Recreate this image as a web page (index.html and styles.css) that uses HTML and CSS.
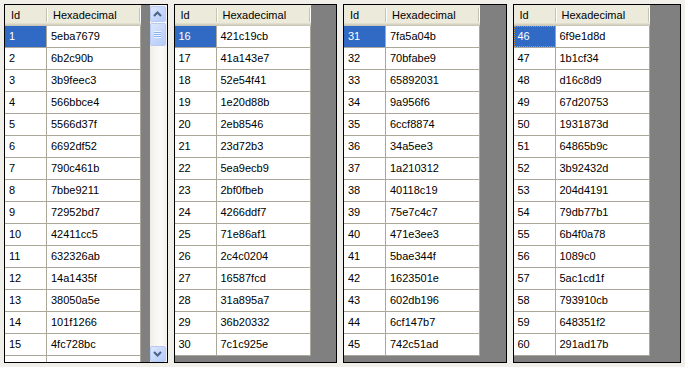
FILE: index.html
```html
<!DOCTYPE html>
<html>
<head>
<meta charset="utf-8">
<link rel="stylesheet" href="styles.css">
</head>
<body>
<div class="wrap">
  <div class="grid p1">
    <div class="tbl">
      <div class="hdr"><div class="hc id">Id</div><div class="hc hex">Hexadecimal</div></div>
      <div class="row"><div class="c id sel">1</div><div class="c hex">5eba7679</div></div>
      <div class="row"><div class="c id">2</div><div class="c hex">6b2c90b</div></div>
      <div class="row"><div class="c id">3</div><div class="c hex">3b9feec3</div></div>
      <div class="row"><div class="c id">4</div><div class="c hex">566bbce4</div></div>
      <div class="row"><div class="c id">5</div><div class="c hex">5566d37f</div></div>
      <div class="row"><div class="c id">6</div><div class="c hex">6692df52</div></div>
      <div class="row"><div class="c id">7</div><div class="c hex">790c461b</div></div>
      <div class="row"><div class="c id">8</div><div class="c hex">7bbe9211</div></div>
      <div class="row"><div class="c id">9</div><div class="c hex">72952bd7</div></div>
      <div class="row"><div class="c id">10</div><div class="c hex">42411cc5</div></div>
      <div class="row"><div class="c id">11</div><div class="c hex">632326ab</div></div>
      <div class="row"><div class="c id">12</div><div class="c hex">14a1435f</div></div>
      <div class="row"><div class="c id">13</div><div class="c hex">38050a5e</div></div>
      <div class="row"><div class="c id">14</div><div class="c hex">101f1266</div></div>
      <div class="row"><div class="c id">15</div><div class="c hex">4fc728bc</div></div>
      <div class="row"><div class="c id"></div><div class="c hex"></div></div>
    </div>
    <div class="sb">
      <div class="sbtn"><div class="sbi"><svg width="9" height="6" viewBox="0 0 9 6"><polyline points="1,5 4.5,1.5 8,5" fill="none" stroke="#4d6185" stroke-width="2"/></svg></div></div>
      <div class="thumb"><div class="sbi"><div class="grip"></div></div></div>
      <div class="track"></div>
      <div class="sbtn"><div class="sbi"><svg width="9" height="6" viewBox="0 0 9 6"><polyline points="1,1 4.5,4.5 8,1" fill="none" stroke="#4d6185" stroke-width="2"/></svg></div></div>
    </div>
  </div>

  <div class="grid">
    <div class="tbl">
      <div class="hdr"><div class="hc id">Id</div><div class="hc hex">Hexadecimal</div></div>
      <div class="row"><div class="c id sel">16</div><div class="c hex">421c19cb</div></div>
      <div class="row"><div class="c id">17</div><div class="c hex">41a143e7</div></div>
      <div class="row"><div class="c id">18</div><div class="c hex">52e54f41</div></div>
      <div class="row"><div class="c id">19</div><div class="c hex">1e20d88b</div></div>
      <div class="row"><div class="c id">20</div><div class="c hex">2eb8546</div></div>
      <div class="row"><div class="c id">21</div><div class="c hex">23d72b3</div></div>
      <div class="row"><div class="c id">22</div><div class="c hex">5ea9ecb9</div></div>
      <div class="row"><div class="c id">23</div><div class="c hex">2bf0fbeb</div></div>
      <div class="row"><div class="c id">24</div><div class="c hex">4266ddf7</div></div>
      <div class="row"><div class="c id">25</div><div class="c hex">71e86af1</div></div>
      <div class="row"><div class="c id">26</div><div class="c hex">2c4c0204</div></div>
      <div class="row"><div class="c id">27</div><div class="c hex">16587fcd</div></div>
      <div class="row"><div class="c id">28</div><div class="c hex">31a895a7</div></div>
      <div class="row"><div class="c id">29</div><div class="c hex">36b20332</div></div>
      <div class="row"><div class="c id">30</div><div class="c hex">7c1c925e</div></div>
    </div>
  </div>

  <div class="grid">
    <div class="tbl">
      <div class="hdr"><div class="hc id">Id</div><div class="hc hex">Hexadecimal</div></div>
      <div class="row"><div class="c id sel">31</div><div class="c hex">7fa5a04b</div></div>
      <div class="row"><div class="c id">32</div><div class="c hex">70bfabe9</div></div>
      <div class="row"><div class="c id">33</div><div class="c hex">65892031</div></div>
      <div class="row"><div class="c id">34</div><div class="c hex">9a956f6</div></div>
      <div class="row"><div class="c id">35</div><div class="c hex">6ccf8874</div></div>
      <div class="row"><div class="c id">36</div><div class="c hex">34a5ee3</div></div>
      <div class="row"><div class="c id">37</div><div class="c hex">1a210312</div></div>
      <div class="row"><div class="c id">38</div><div class="c hex">40118c19</div></div>
      <div class="row"><div class="c id">39</div><div class="c hex">75e7c4c7</div></div>
      <div class="row"><div class="c id">40</div><div class="c hex">471e3ee3</div></div>
      <div class="row"><div class="c id">41</div><div class="c hex">5bae344f</div></div>
      <div class="row"><div class="c id">42</div><div class="c hex">1623501e</div></div>
      <div class="row"><div class="c id">43</div><div class="c hex">602db196</div></div>
      <div class="row"><div class="c id">44</div><div class="c hex">6cf147b7</div></div>
      <div class="row"><div class="c id">45</div><div class="c hex">742c51ad</div></div>
    </div>
  </div>

  <div class="grid p4">
    <div class="tbl">
      <div class="hdr"><div class="hc id">Id</div><div class="hc hex">Hexadecimal</div></div>
      <div class="row"><div class="c id sel focus">46</div><div class="c hex">6f9e1d8d</div></div>
      <div class="row"><div class="c id">47</div><div class="c hex">1b1cf34</div></div>
      <div class="row"><div class="c id">48</div><div class="c hex">d16c8d9</div></div>
      <div class="row"><div class="c id">49</div><div class="c hex">67d20753</div></div>
      <div class="row"><div class="c id">50</div><div class="c hex">1931873d</div></div>
      <div class="row"><div class="c id">51</div><div class="c hex">64865b9c</div></div>
      <div class="row"><div class="c id">52</div><div class="c hex">3b92432d</div></div>
      <div class="row"><div class="c id">53</div><div class="c hex">204d4191</div></div>
      <div class="row"><div class="c id">54</div><div class="c hex">79db77b1</div></div>
      <div class="row"><div class="c id">55</div><div class="c hex">6b4f0a78</div></div>
      <div class="row"><div class="c id">56</div><div class="c hex">1089c0</div></div>
      <div class="row"><div class="c id">57</div><div class="c hex">5ac1cd1f</div></div>
      <div class="row"><div class="c id">58</div><div class="c hex">793910cb</div></div>
      <div class="row"><div class="c id">59</div><div class="c hex">648351f2</div></div>
      <div class="row"><div class="c id">60</div><div class="c hex">291ad17b</div></div>
    </div>
  </div>
</div>
</body>
</html>
```

FILE: styles.css
```css
html, body {
  margin: 0;
  padding: 0;
  background: #f0efea;
  font-family: "Liberation Sans", Arial, sans-serif;
  font-size: 11px;
  color: #000;
}
.wrap {
  display: flex;
  gap: 6px;
  padding: 4px;
}
.grid {
  width: 164px;
  height: 359px;
  box-sizing: border-box;
  border: 1px solid #000;
  background: #808080;
  display: flex;
  justify-content: space-between;
  overflow: hidden;
}
.p4 { width: 169px; }
.tbl {
  width: 136px;
  display: flex;
  flex-direction: column;
  overflow: hidden;
}
.hdr {
  height: 21px;
  flex: none;
  display: flex;
  background: #ebeadb;
  box-shadow: inset 0 -1px 0 #cbc7b8, inset 0 -2px 0 #d6d2c2, inset 0 -3px 0 #e2decd;
}
.hc {
  position: relative;
  box-sizing: border-box;
  line-height: 20px;
  padding-left: 6px;
}
.hc::after {
  content: "";
  position: absolute;
  right: 0;
  top: 3px;
  bottom: 4px;
  width: 1px;
  background: #c7c5b2;
  box-shadow: 1px 0 0 #fff;
}
.hc.hex::after { right: 1px; }
.row {
  height: 22px;
  flex: none;
  display: flex;
  background: #fff;
  box-sizing: border-box;
  border-bottom: 1px solid #aca899;
}
.c {
  box-sizing: border-box;
  line-height: 21px;
  padding-left: 4px;
  border-right: 1px solid #aca899;
  white-space: nowrap;
}
.id { width: 42px; flex: none; }
.hex { width: 94px; flex: none; }
.sel {
  background: #316ac5;
  color: #fff;
}
.focus {
  outline: 1px dotted #ce953a;
  outline-offset: -1px;
}
.sb {
  width: 17px;
  flex: none;
  display: flex;
  flex-direction: column;
  background: linear-gradient(to right, #eeede5, #f7f6f2 30%, #fbfaf7 70%, #f1f0ea);
}
.sbtn, .thumb {
  flex: none;
  height: 17px;
  box-sizing: border-box;
  padding: 1px 1px 0 0;
  display: flex;
}
.thumb { height: 25px; padding: 1px 1px 1px 0; }
.sbi {
  flex: 1;
  border: 1px solid #b7cbf6;
  border-radius: 2px;
  background: linear-gradient(135deg, #dde7fd, #c4d5fb 60%, #b7cbf7);
  display: flex;
  align-items: center;
  justify-content: center;
}
.track { flex: 1; }
.grip {
  width: 7px;
  height: 7px;
  background: repeating-linear-gradient(to bottom, #eef4fe 0 1px, #8cb0f8 1px 2px);
}
```
